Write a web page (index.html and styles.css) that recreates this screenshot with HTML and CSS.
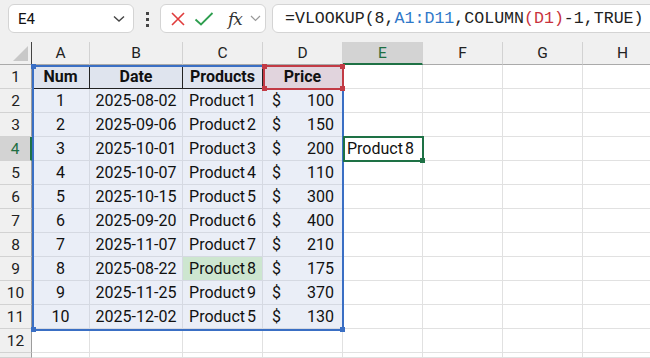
FILE: index.html
```html
<!DOCTYPE html>
<html lang="en">
<head>
    <meta charset="UTF-8">
    <title>VLOOKUP sheet</title>
    <link rel="stylesheet" href="styles.css">
</head>
<body>
    <div class="toolbar">
        <div class="name-box">
            <span>E4</span>
            <svg width="12" height="8" viewBox="0 0 12 8"><path d="M1 1.5 L6 6 L11 1.5" fill="none" stroke="#444" stroke-width="1.4"/></svg>
        </div>
        <div class="dots"><i></i><i></i><i></i></div>
        <div class="fx-box">
            <svg width="16" height="16" viewBox="0 0 16 16"><path d="M2 2 L14 14 M14 2 L2 14" stroke="#e03c3c" stroke-width="1.6"/></svg>
            <svg width="20" height="16" viewBox="0 0 20 16"><path d="M1.5 8.5 L7 13.5 L18.5 2" fill="none" stroke="#2e9e4f" stroke-width="1.8"/></svg>
            <span class="fx">fx</span>
            <svg width="11" height="7" viewBox="0 0 11 7"><path d="M1 1 L5.5 5.5 L10 1" fill="none" stroke="#999" stroke-width="1.2"/></svg>
        </div>
        <div class="formula">=VLOOKUP(8,<span class="ref-blue">A1:D11</span>,COLUMN<span class="ref-red">(D1)</span>-1,TRUE)</div>
    </div>

    <div class="sheet" id="sheet"></div>

    <script>
        const sheet = document.getElementById('sheet');
        const cols = ['A', 'B', 'C', 'D', 'E', 'F', 'G', 'H'];
        const data = [
            [1, '2025-08-02', 'Product 1', 100],
            [2, '2025-09-06', 'Product 2', 150],
            [3, '2025-10-01', 'Product 3', 200],
            [4, '2025-10-07', 'Product 4', 110],
            [5, '2025-10-15', 'Product 5', 300],
            [6, '2025-09-20', 'Product 6', 400],
            [7, '2025-11-07', 'Product 7', 210],
            [8, '2025-08-22', 'Product 8', 175],
            [9, '2025-11-25', 'Product 9', 370],
            [10, '2025-12-02', 'Product 5', 130]
        ];

        function cell(cls, html) {
            const d = document.createElement('div');
            d.className = 'cell ' + cls;
            d.innerHTML = html || '';
            sheet.appendChild(d);
            return d;
        }

        // column headers
        cell('corner', '<span class="tri"></span>');
        cols.forEach(c => cell('col-head' + (c === 'E' ? ' active' : ''), c));

        // header row
        cell('row-head', '1');
        ['Num', 'Date', 'Products'].forEach(h => cell('t-head', h));
        cell('t-head price-head', 'Price');
        for (let i = 0; i < 4; i++) cell('');

        data.forEach((r, i) => {
            const n = i + 2;
            cell('row-head' + (n === 4 ? ' active' : ''), n);
            cell('t-data', r[0]);
            cell('t-data', r[1]);
            cell('t-data prod' + (r[0] === 8 ? ' match' : ''), r[2]);
            cell('t-data money', '<span>$</span><span>' + r[3] + '</span>');
            cell(n === 4 ? 'result prod' : '', n === 4 ? 'Product 8' : '');
            for (let j = 0; j < 3; j++) cell('');
        });

        cell('row-head', '12');
        for (let j = 0; j < 8; j++) cell('');
        // row 13 only peeks in at the bottom edge
        cell('row-head', '');
        for (let j = 0; j < 8; j++) cell('');
    </script>
    <div class="range blue-range"><i class="h tl"></i><i class="h tr"></i><i class="h bl"></i><i class="h br"></i></div>
    <div class="range red-range"><i class="h tl"></i><i class="h tr"></i><i class="h bl"></i><i class="h br"></i></div>
    <div class="range green-sel"><i class="h br"></i></div>
</body>
</html>
```

FILE: styles.css
```css
* {
    margin: 0;
    padding: 0;
    box-sizing: border-box;
}

body {
    font-family: Roboto, "Noto Sans", sans-serif;
    background: #fff;
    width: 650px;
    height: 358px;
    overflow: hidden;
    position: relative;
    color: #111;
}

.toolbar {
    height: 42px;
    background: #f0f0f0;
    display: flex;
    align-items: flex-start;
    padding: 4px 0 0 8px;
    overflow: hidden;
}

.name-box,
.fx-box,
.formula {
    height: 29px;
    background: #fff;
    border: 1px solid #d4d4d4;
    border-radius: 6px;
    display: flex;
    align-items: center;
    flex-shrink: 0;
}

.name-box {
    width: 126px;
    justify-content: space-between;
    padding: 0 8px 0 9px;
    font-size: 15px;
}

.dots {
    width: 26px;
    flex-shrink: 0;
    display: flex;
    flex-direction: column;
    align-items: center;
    gap: 3px;
    padding-top: 8px;
}

.dots i {
    width: 3px;
    height: 3px;
    background: #444;
}

.fx-box {
    width: 106px;
    padding: 0 4px 0 9px;
    justify-content: space-between;
}

.fx {
    font-family: "DejaVu Serif", "Liberation Serif", serif;
    font-style: italic;
    font-size: 17px;
    color: #333;
    letter-spacing: -1px;
    margin-left: 6px;
}

.formula {
    margin: 0 -12px 0 6px;
    flex: 1 0 auto;
    padding-left: 12px;
    font-family: "Liberation Mono", monospace;
    font-size: 16.6px;
    color: #222;
}

.ref-blue { color: #2f78c9; }
.ref-red { color: #c8323c; }

.sheet {
    display: grid;
    grid-template-columns: 32px 58px 93px 80px 80px 80px 80px 80px 80px;
    grid-template-rows: 23px repeat(12, 24px) 5px;
    font-size: 16px;
    width: 663px;
}

.cell {
    border-right: 1px solid #e1e1e1;
    border-bottom: 1px solid #e1e1e1;
    display: flex;
    align-items: center;
    padding: 0 6px;
    white-space: nowrap;
    overflow: hidden;
}

.corner {
    background: #f0f0f0;
    border-right: 1px solid #444;
    border-bottom: 1px solid #aaa;
    position: relative;
}

.tri {
    position: absolute;
    right: 3px;
    bottom: 3px;
    width: 0;
    height: 0;
    border-left: 15px solid transparent;
    border-bottom: 15px solid #c8c8c8;
}

.col-head {
    background: #f0f0f0;
    justify-content: center;
    border-right: 1px solid #d2d2d2;
    border-bottom: 1px solid #aaa;
    color: #222;
    font-size: 15.5px;
}

.col-head.active {
    background: #d3d3d3;
    color: #1e6e42;
    border-bottom: 2px solid #1e7145;
}

.row-head {
    background: #f0f0f0;
    justify-content: center;
    border-right: 1px solid #9c9c9c;
    border-bottom: 1px solid #d2d2d2;
    color: #222;
    padding: 0;
    font-size: 15.5px;
}

.row-head.active {
    background: #d3d3d3;
    color: #1e6e42;
    border-right: 2px solid #1e7145;
}

.t-head {
    background: #dfe4ee;
    font-weight: bold;
    justify-content: center;
    border-right: 1px solid #222;
    border-bottom: 1px solid #222;
}

.price-head {
    background: #e1d4dd;
    border-right: 1px solid #d6d6d6;
}

.t-data {
    background: #eaeef7;
    border-right: 1px solid #d5d9e2;
    border-bottom: 1px solid #d5d9e2;
    justify-content: center;
    padding: 0 3px;
}

.prod {
    word-spacing: -2px;
}

.match {
    background: #cde6d0;
}

.money {
    justify-content: space-between;
    padding: 0 8px 0 9px;
}

.result {
    padding-left: 4px;
}

.range {
    position: absolute;
    pointer-events: none;
}

.blue-range {
    left: 32px;
    top: 65px;
    width: 312px;
    height: 266px;
    border: 2px solid #3a6fc4;
}

.red-range {
    left: 263px;
    top: 65px;
    width: 81px;
    height: 25px;
    border: 2px solid #c23b45;
}

.green-sel {
    left: 343px;
    top: 136px;
    width: 81px;
    height: 26px;
    border: 2px solid #1e7145;
}

.h {
    position: absolute;
    width: 5px;
    height: 5px;
}

.blue-range .h { background: #3a6fc4; }
.red-range .h { background: #c23b45; }
.green-sel .h { background: #1e7145; }

.tl { left: -3px; top: -3px; }
.tr { right: -3px; top: -3px; }
.bl { left: -3px; bottom: -3px; }
.br { right: -3px; bottom: -3px; }
```
